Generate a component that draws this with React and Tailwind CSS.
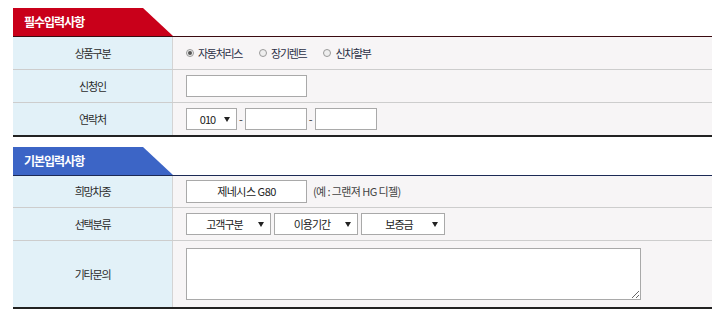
import React from "react";

const font = { fontFamily: '"Noto Sans CJK KR", "Noto Sans", sans-serif' };

function Tab({ title, color, line }) {
  return (
    <div className={`flex h-[29px] border-b ${line}`}>
      <div
        className={`w-[160px] h-full ${color} [clip-path:polygon(0_0,130px_0,160px_100%,0_100%)] flex items-center pl-[11px] text-[12px] font-bold text-white tracking-[-1px]`}
      >
        {title}
      </div>
    </div>
  );
}

function Row({ label, h, last, children }) {
  return (
    <div
      className={`flex ${h} ${
        last ? "border-b-2 border-[#222]" : "border-b border-[#cdcdcd]"
      }`}
    >
      <div className="w-[160px] shrink-0 bg-[#e2f1f8] border-r border-[#d4d4d4] flex items-center justify-center text-[11px] tracking-[-1.2px] text-[#2b2b2b]">
        {label}
      </div>
      <div className="flex-1 bg-[#f7f5f6] pl-[13px] flex items-center text-[11px] text-[#333]">
        {children}
      </div>
    </div>
  );
}

function Radio({ checked, label }) {
  return (
    <span className="flex items-center mr-[17px]">
      <span className="w-[8px] h-[8px] rounded-full border border-[#9a9a9a] bg-[#eeeeee] flex items-center justify-center mr-[4px]">
        {checked && <span className="w-[4px] h-[4px] rounded-full bg-[#555]" />}
      </span>
      <span className="text-[#2a2f45] tracking-[-1.3px]">{label}</span>
    </span>
  );
}

function Select({ w, text }) {
  return (
    <div
      className={`${w} h-[22px] bg-white border border-[#a9a9a9] flex items-center justify-between pl-[4px] pr-[6px] text-[11px] text-[#222]`}
    >
      <span className="flex-1 text-center tracking-[-1px]">{text}</span>
      <span className="w-0 h-0 border-l-[3px] border-r-[3px] border-t-[5px] border-l-transparent border-r-transparent border-t-[#222]" />
    </div>
  );
}

function Box({ w }) {
  return <div className={`${w} h-[22px] bg-white border border-[#a9a9a9]`} />;
}

export default function App() {
  return (
    <div className="w-[720px] h-[315px] bg-white pt-[8px] pl-[13px] pr-[8px]" style={font}>
      {/* 필수입력사항 */}
      <Tab title="필수입력사항" color="bg-[#c9001a]" line="border-[#3a0a10]" />
      <Row label="상품구분" h="h-[33px]">
        <Radio checked label="자동처리스" />
        <Radio label="장기렌트" />
        <Radio label="신차할부" />
      </Row>
      <Row label="신청인" h="h-[33px]">
        <Box w="w-[121px]" />
      </Row>
      <Row label="연락처" h="h-[34px]" last>
        <Select w="w-[51px]" text="010" />
        <span className="mx-[2px]">-</span>
        <Box w="w-[62px]" />
        <span className="mx-[2px]">-</span>
        <Box w="w-[62px]" />
      </Row>

      {/* 기본입력사항 */}
      <div className="mt-[10px]">
        <Tab title="기본입력사항" color="bg-[#3c65c6]" line="border-[#1c2a55]" />
        <Row label="희망차종" h="h-[32px]">
          <div className="w-[121px] h-[23px] bg-white border border-[#a9a9a9] flex items-center justify-center text-[11px] tracking-[-0.5px] text-[#222]">
            제네시스 G80
          </div>
          <span className="ml-[6px] text-[11px] tracking-[-0.6px] text-[#444]">(예 : 그랜져 HG 디젤)</span>
        </Row>
        <Row label="선택분류" h="h-[33px]">
          <div className="flex gap-[3px]">
            <Select w="w-[85px]" text="고객구분" />
            <Select w="w-[84px]" text="이용기간" />
            <Select w="w-[84px]" text="보증금" />
          </div>
        </Row>
        <Row label="기타문의" h="h-[68px]" last>
          <textarea className="w-[455px] h-[52px] bg-white border border-[#a9a9a9] outline-none" />
        </Row>
      </div>
    </div>
  );
}
